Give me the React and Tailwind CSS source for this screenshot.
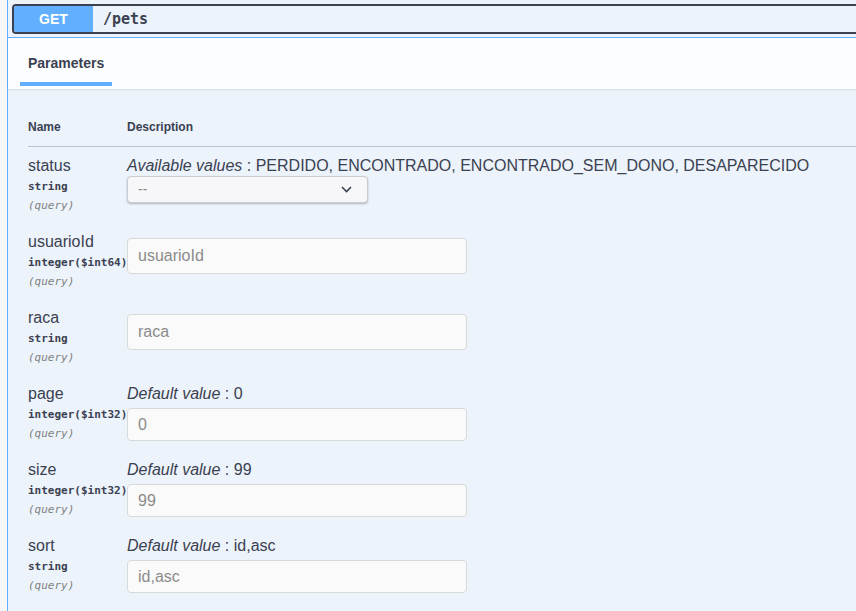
import React from "react";

const sans = { fontFamily: '"Liberation Sans", Arial, sans-serif' };
const mono = { fontFamily: '"DejaVu Sans Mono", "Liberation Mono", monospace' };

function NameCol({ name, type }) {
  return (
    <div className="w-[99px] shrink-0 flex flex-col">
      <div className="text-[16px] leading-[18px] text-[#3b4151]">{name}</div>
      <div className="py-[5px] text-[11px] leading-[14px] font-bold text-[#3b4151] whitespace-nowrap" style={mono}>
        {type}
      </div>
      <div className="text-[11px] leading-[14px] italic text-[#808080]" style={mono}>
        (query)
      </div>
    </div>
  );
}

function Input({ placeholder, mt = "mt-[5px]" }) {
  return (
    <div
      className={`${mt} w-[340px] h-[36px] border border-[#d9d9d9] rounded-[4px] bg-[#fafafa] px-[10px] flex items-center text-[16px] text-[#8b8b8b]`}
    >
      {placeholder}
    </div>
  );
}

function Label({ k, v }) {
  return (
    <div className="text-[16px] leading-[18px] text-[#3b4151] whitespace-nowrap">
      <i>{k}</i> : {v}
    </div>
  );
}

function Row({ children }) {
  return <div className="flex h-[76px] py-[10px]">{children}</div>;
}

export default function App() {
  return (
    <div className="w-[856px] h-[611px] overflow-hidden bg-[#f7f7f7] flex" style={sans}>
      <div className="ml-[7px] w-[900px] shrink-0 border-l border-[#61affe] bg-[#ecf3fb] flex flex-col">
        {/* summary */}
        <div className="h-[38px] border-b border-[#61affe] pt-[4px] pl-[4px] shrink-0">
          <div className="h-[30px] border-2 border-[#3b4151] rounded-[4px] flex items-center overflow-hidden">
            <div className="w-[79px] h-full bg-[#61affe] rounded-l-[2px] flex items-center justify-center text-white text-[14px] font-bold">
              GET
            </div>
            <div className="pl-[10px] text-[15px] font-bold text-[#3b4151]" style={mono}>
              /pets
            </div>
          </div>
        </div>
        {/* tab header */}
        <div className="h-[51px] shrink-0 bg-[#fcfdfe] shadow-[0_1px_2px_rgba(0,0,0,0.1)] pl-[12px] relative z-10">
          <div className="inline-flex flex-col pt-[17px]">
            <div className="px-[8px] text-[14px] leading-[16px] font-bold text-[#3b4151]">Parameters</div>
            <div className="mt-[11px] h-[4px] bg-[#61affe]" />
          </div>
        </div>
        {/* params */}
        <div className="pt-[20px] pl-[20px]">
          <div className="flex pt-[11px] pb-[11px] border-b border-[#bec3cb] text-[12px] leading-[15px] font-bold text-[#3b4151]">
            <div className="w-[99px] shrink-0">Name</div>
            <div>Description</div>
          </div>
          <Row>
            <NameCol name="status" type="string" />
            <div className="flex flex-col">
              <Label k="Available values" v="PERDIDO, ENCONTRADO, ENCONTRADO_SEM_DONO, DESAPARECIDO" />
              <div className="mt-[1px] w-[241px] h-[27px] rounded-[4px] border border-[#c9ccd2] bg-[#f7f7f9] shadow-[0_1px_2px_rgba(0,0,0,0.25)] flex items-center justify-between pl-[10px] pr-[15px] text-[14px] text-[#8a8a8a]">
                <span>--</span>
                <svg width="11" height="7" viewBox="0 0 11 7" fill="none">
                  <path d="M1 1L5.5 5.5L10 1" stroke="#3b4151" strokeWidth="1.6" />
                </svg>
              </div>
            </div>
          </Row>
          <Row>
            <NameCol name="usuarioId" type="integer($int64)" />
            <div className="flex flex-col">
              <Input placeholder="usuarioId" />
            </div>
          </Row>
          <Row>
            <NameCol name="raca" type="string" />
            <div className="flex flex-col">
              <Input placeholder="raca" />
            </div>
          </Row>
          <Row>
            <NameCol name="page" type="integer($int32)" />
            <div className="flex flex-col">
              <Label k="Default value" v="0" />
              <Input placeholder="0" />
            </div>
          </Row>
          <Row>
            <NameCol name="size" type="integer($int32)" />
            <div className="flex flex-col">
              <Label k="Default value" v="99" />
              <Input placeholder="99" />
            </div>
          </Row>
          <Row>
            <NameCol name="sort" type="string" />
            <div className="flex flex-col">
              <Label k="Default value" v="id,asc" />
              <Input placeholder="id,asc" />
            </div>
          </Row>
        </div>
      </div>
    </div>
  );
}
